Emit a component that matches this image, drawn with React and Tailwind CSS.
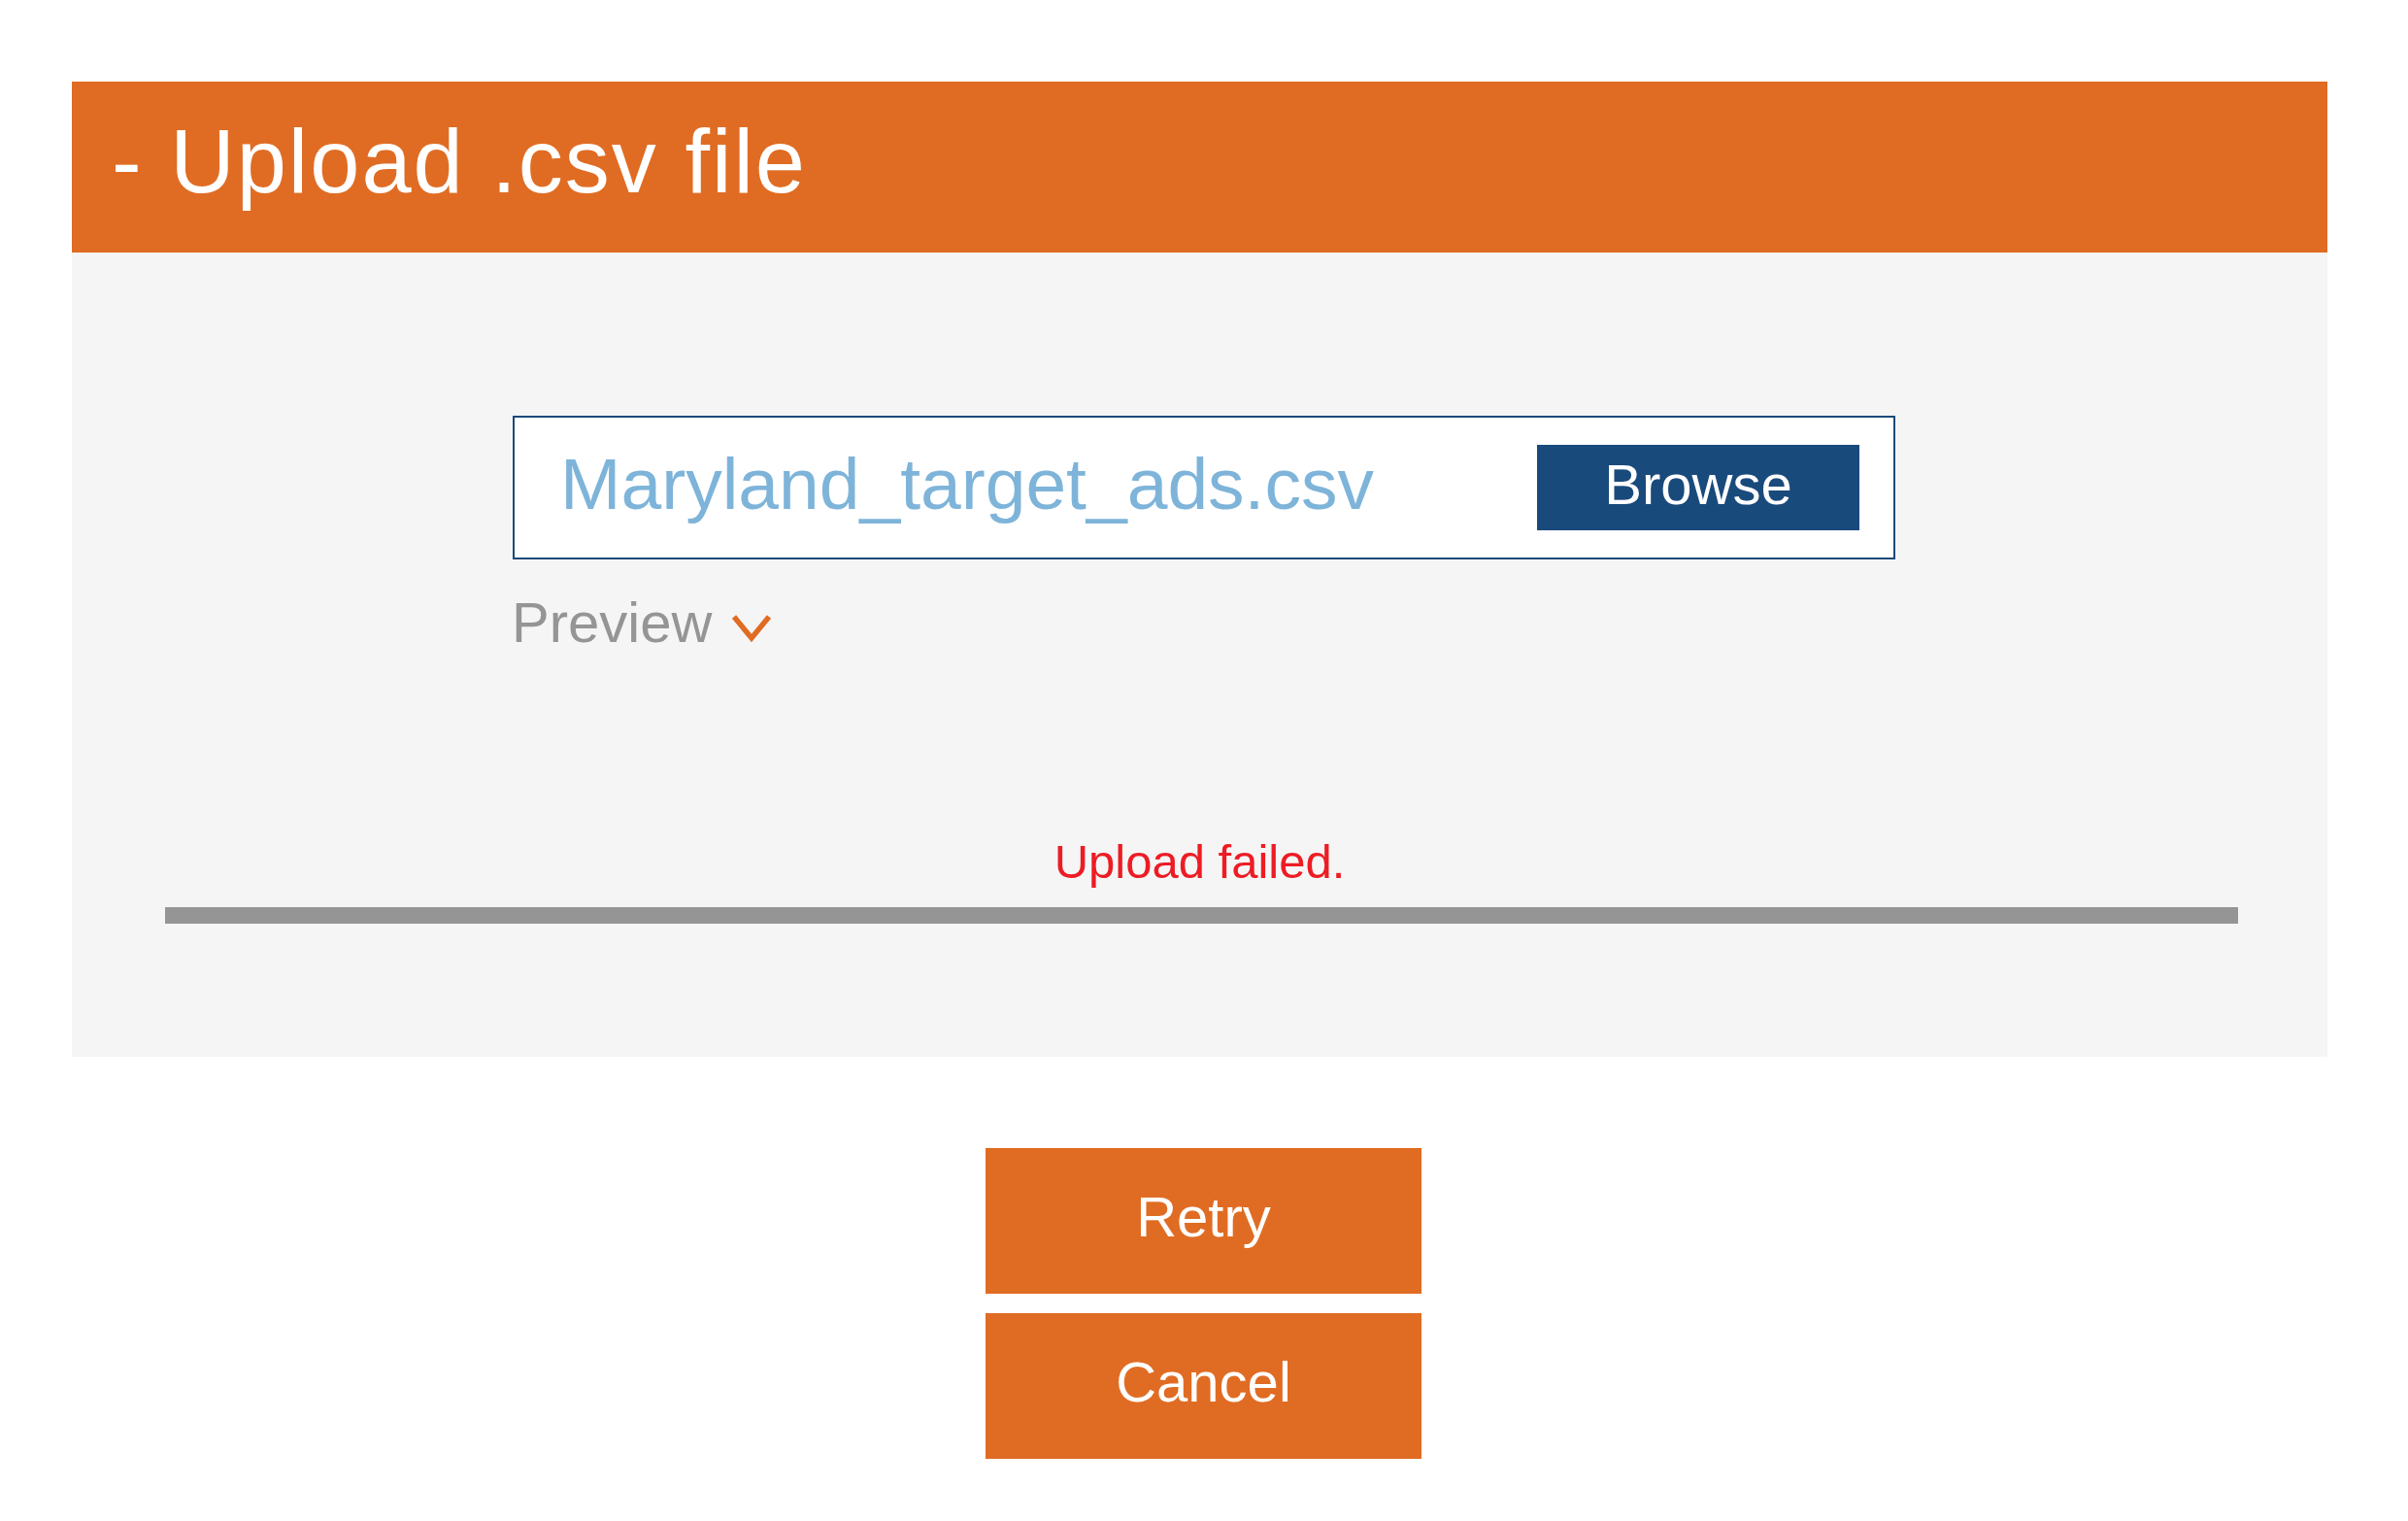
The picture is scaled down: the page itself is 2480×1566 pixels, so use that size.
import React from "react";

const ChevronDown = () => (
  <svg width="44" height="32" viewBox="0 0 44 32" className="mt-[18px] ml-[19px]">
    <path d="M4 5 L22 27 L40 5" fill="none" stroke="#e06c23" strokeWidth="5.5" />
  </svg>
);

const UploadCsv = () => {
  return (
    <div className="min-h-[1566px] bg-white pt-[84px] pl-[74px] pr-[83px] font-['Liberation_Sans',Arial,sans-serif]">
      <div className="h-[176px] bg-[#e06c23] pl-[41px] pt-[36px]">
        <h2 className="text-[92px] leading-none tracking-[2px] text-white">- Upload .csv file</h2>
      </div>

      <div className="h-[828px] bg-[#f5f5f5] pt-[168px]">
        <div className="ml-[454px] w-[1424px] h-[148px] border-2 border-[#1a4a7b] bg-white flex items-center justify-between">
          <span className="pl-[47px] mb-[8px] text-[75px] leading-none text-[#7eb4d9]">
            Maryland_target_ads.csv
          </span>
          <button className="mr-[35px] w-[332px] h-[88px] pb-[6px] bg-[#194a7c] text-white text-[58px] leading-none flex items-center justify-center">
            Browse
          </button>
        </div>

        <div className="ml-[453px] mt-[36px] flex items-start">
          <span className="text-[58px] leading-none text-[#959595]">Preview</span>
          <ChevronDown />
        </div>

        <p className="mt-[193px] text-center text-[49px] leading-none text-[#ed1c24]">Upload failed.</p>

        <div className="mt-[22px] ml-[96px] mr-[92px] h-[17px] bg-[#959595]" />
      </div>

      <div className="ml-[941px] mt-[94px] flex flex-col gap-[20px] w-[449px]">
        <button className="h-[150px] pb-[8px] bg-[#e06c23] text-white text-[58px] leading-none">Retry</button>
        <button className="h-[150px] pb-[8px] bg-[#e06c23] text-white text-[58px] leading-none">Cancel</button>
      </div>
    </div>
  );
};

export default UploadCsv;
